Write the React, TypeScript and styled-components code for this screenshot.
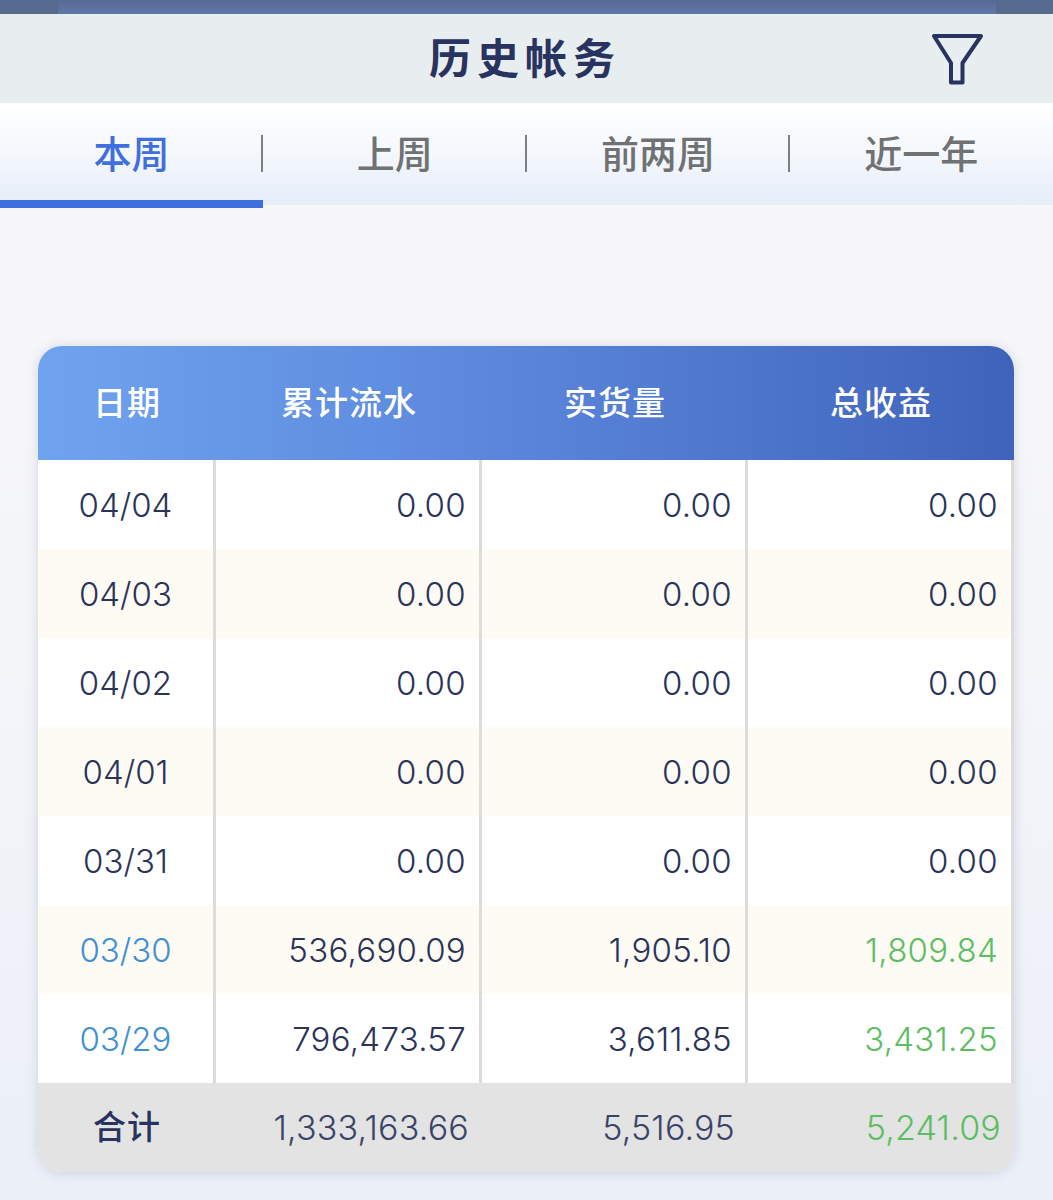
import styled, { createGlobalStyle } from "styled-components";

const GlobalStyle = createGlobalStyle`
  html, body {
    margin: 0;
    padding: 0;
    background: #f3f5f9;
  }
  body {
    font-family: "Inter", "Noto Sans CJK SC", sans-serif;
  }
`;

const Page = styled.div`
  display: flex;
  flex-direction: column;
  width: 1053px;
  height: 1200px;
  overflow: hidden;
  background: linear-gradient(180deg, #f8f8fa 0%, #f4f5f9 55%, #ebeff8 100%);
`;

const StatusStrip = styled.div`
  display: flex;
  justify-content: center;
  height: 14px;
  background: #56698f;
`;

const StatusInner = styled.div`
  width: 938px;
  background: linear-gradient(180deg, #576b95 0%, #5f78a6 100%);
`;

const Header = styled.header`
  position: relative;
  display: flex;
  align-items: center;
  justify-content: center;
  height: 89px;
  background: #e8edf0;
`;

const Title = styled.h1`
  margin: 0;
  padding: 0 3px 7px 0;
  color: #28335f;
  font-family: "Noto Sans CJK SC", sans-serif;
  font-size: 42px;
  font-weight: 700;
  letter-spacing: 6px;
`;

const FilterButton = styled.button`
  position: absolute;
  top: 18px;
  right: 68px;
  display: flex;
  width: 54px;
  height: 56px;
  padding: 0;
  border: 0;
  background: none;
`;

const Tabs = styled.nav`
  display: grid;
  grid-template-columns: repeat(4, 1fr);
  height: 102px;
  background: linear-gradient(180deg, #ffffff 0%, #f4f7fc 50%, #e6eefa 100%);
`;

const Tab = styled.div<{ $active?: boolean; $last?: boolean }>`
  position: relative;
  display: flex;
  align-items: center;
  justify-content: center;
  padding-bottom: 6px;
  color: ${(p) => (p.$active ? "#3f6fdc" : "#6f7173")};
  font-family: "Noto Sans CJK SC", sans-serif;
  font-size: 38px;
  font-weight: 500;

  &::after {
    content: "";
    display: ${(p) => (p.$last ? "none" : "block")};
    position: absolute;
    top: 32px;
    right: 0;
    width: 2px;
    height: 37px;
    background: #7d8083;
  }

  &::before {
    content: "";
    display: ${(p) => (p.$active ? "block" : "none")};
    position: absolute;
    left: 0;
    right: 0;
    bottom: -3px;
    height: 8px;
    background: #3f6fdc;
  }
`;

const Content = styled.main`
  padding: 141px 39px 0 38px;
`;

const Table = styled.div`
  border-radius: 24px;
  overflow: hidden;
  background: #ffffff;
  box-shadow: 0 1px 12px rgba(120, 130, 150, 0.28);
`;

const HeadRow = styled.div`
  display: grid;
  grid-template-columns: 178px 266px 266px 266px;
  height: 114px;
  background: linear-gradient(90deg, #6fa3ef 0%, #5c88dc 45%, #3f63bb 100%);
`;

const HeadCell = styled.div`
  display: flex;
  align-items: center;
  justify-content: center;
  padding-bottom: 5px;
  color: #ffffff;
  font-family: "Noto Sans CJK SC", sans-serif;
  font-size: 33px;
  font-weight: 500;
  letter-spacing: 1px;
`;

const Row = styled.div<{ $striped?: boolean }>`
  display: grid;
  grid-template-columns: 178px 266px 266px 266px;
  height: 89px;
  background: ${(p) => (p.$striped ? "#fefbf5" : "#ffffff")};
`;

const DateCell = styled.div<{ $link?: boolean }>`
  display: flex;
  align-items: center;
  justify-content: center;
  border-right: 3px solid #dcdcdc;
  color: ${(p) => (p.$link ? "#4190cf" : "#2a3358")};
  font-size: 33px;
  font-weight: 350;
`;

const NumberCell = styled.div<{ $gain?: boolean }>`
  display: flex;
  align-items: center;
  justify-content: flex-end;
  padding-right: 13px;
  border-right: 3px solid #dcdcdc;
  color: ${(p) => (p.$gain ? "#5cbd63" : "#2a3358")};
  font-size: 33px;
  font-weight: 350;
  letter-spacing: 0.3px;
`;

const TotalRow = styled.div`
  display: grid;
  grid-template-columns: 178px 266px 266px 266px;
  height: 89px;
  background: #e3e3e3;
`;

const TotalLabel = styled.div`
  display: flex;
  align-items: center;
  justify-content: center;
  padding-bottom: 5px;
  color: #28335f;
  font-family: "Noto Sans CJK SC", sans-serif;
  font-size: 33px;
  font-weight: 500;
  letter-spacing: 1px;
`;

const TotalCell = styled.div<{ $gain?: boolean }>`
  display: flex;
  align-items: center;
  justify-content: flex-end;
  padding-right: 13px;
  color: ${(p) => (p.$gain ? "#5cbd63" : "#3a4468")};
  font-size: 34px;
  font-weight: 350;
  letter-spacing: 0.2px;
`;

const tabs = ["本周", "上周", "前两周", "近一年"];
const columns = ["日期", "累计流水", "实货量", "总收益"];

const rows = [
  { date: "04/04", flow: "0.00", volume: "0.00", profit: "0.00" },
  { date: "04/03", flow: "0.00", volume: "0.00", profit: "0.00" },
  { date: "04/02", flow: "0.00", volume: "0.00", profit: "0.00" },
  { date: "04/01", flow: "0.00", volume: "0.00", profit: "0.00" },
  { date: "03/31", flow: "0.00", volume: "0.00", profit: "0.00" },
  { date: "03/30", flow: "536,690.09", volume: "1,905.10", profit: "1,809.84", active: true },
  { date: "03/29", flow: "796,473.57", volume: "3,611.85", profit: "3,431.25", active: true },
];

const App = () => {
  return (
    <Page>
      <GlobalStyle />
      <StatusStrip>
        <StatusInner />
      </StatusStrip>
      <Header>
        <Title>历史帐务</Title>
        <FilterButton aria-label="筛选">
          <svg width="54" height="56" viewBox="0 0 54 56" fill="none">
            <path
              d="M3 4H50L31.5 31V50.5H20V31L3 4Z"
              stroke="#28335f"
              strokeWidth="4"
              strokeLinejoin="round"
            />
          </svg>
        </FilterButton>
      </Header>
      <Tabs>
        {tabs.map((tab, index) => (
          <Tab key={tab} $active={index === 0} $last={index === tabs.length - 1}>
            {tab}
          </Tab>
        ))}
      </Tabs>
      <Content>
        <Table>
          <HeadRow>
            {columns.map((col) => (
              <HeadCell key={col}>{col}</HeadCell>
            ))}
          </HeadRow>
          {rows.map((row, index) => (
            <Row key={row.date} $striped={index % 2 === 1}>
              <DateCell $link={row.active}>{row.date}</DateCell>
              <NumberCell>{row.flow}</NumberCell>
              <NumberCell>{row.volume}</NumberCell>
              <NumberCell $gain={row.active}>{row.profit}</NumberCell>
            </Row>
          ))}
          <TotalRow>
            <TotalLabel>合计</TotalLabel>
            <TotalCell>1,333,163.66</TotalCell>
            <TotalCell>5,516.95</TotalCell>
            <TotalCell $gain>5,241.09</TotalCell>
          </TotalRow>
        </Table>
      </Content>
    </Page>
  );
};

export default App;
